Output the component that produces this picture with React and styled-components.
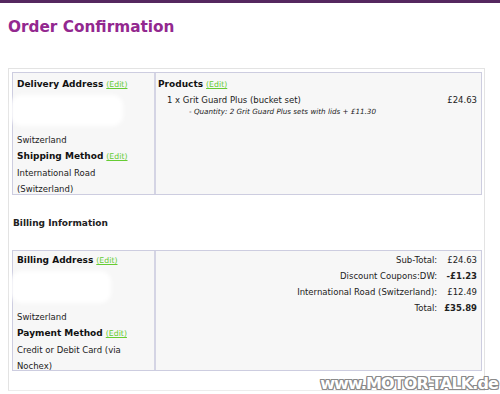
import React from 'react';
import styled, { createGlobalStyle } from 'styled-components';

const Global = createGlobalStyle`
  body {
    margin: 0;
    background: #fff;
    font-family: "DejaVu Sans", Verdana, sans-serif;
    color: #222;
  }
`;

const Page = styled.div`
  position: relative;
  width: 500px;
  height: 394px;
  overflow: hidden;
`;

const TopBar = styled.div`
  height: 3px;
  background: #55275f;
`;

const Title = styled.h1`
  margin: 14px 0 0 8px;
  font-size: 15.3px;
  line-height: 20px;
  font-weight: bold;
  color: #93288f;
`;

const Outer = styled.div`
  margin: 31px 15px 0 8px;
  border: 1px solid #e3e3e3;
  border-bottom-color: #ececec;
  padding: 3px 2px 19px 3px;
`;

const Table = styled.div`
  display: flex;
  border: 1px solid #cdcde0;
  background: #f7f7f7;
  height: ${(p) => p.h}px;
  box-sizing: border-box;
`;

const LeftCell = styled.div`
  width: 133px;
  border-right: 2px solid #d4d4e4;
  padding: ${(p) => p.top}px 4px 0 4px;
  font-size: 8.5px;
  line-height: 16px;
`;

const RightCell = styled.div`
  flex: 1;
  padding: ${(p) => p.top}px 3px 0 2px;
  font-size: 8.5px;
  line-height: 16px;
`;

const Heading = styled.div`
  font-weight: bold;
  font-size: 9px;
  color: #111;
`;

const Edit = styled.a`
  font-weight: normal;
  font-size: 7.8px;
  color: #6c3;
  text-decoration: underline;
  margin-left: 3px;
`;

const Redacted = styled.div`
  position: relative;
  height: ${(p) => p.h}px;
  &::before {
    content: '';
    position: absolute;
    left: -6px;
    top: 2px;
    width: ${(p) => p.w}px;
    height: ${(p) => p.h - 8}px;
    background: #fff;
    border-radius: 10px;
    filter: blur(2px);
  }
`;

const Line = styled.div``;

const ItemRow = styled.div`
  display: flex;
  justify-content: space-between;
  padding: 0 1px 0 9px;
  line-height: 15px;
`;

const ItemSub = styled.div`
  font-style: italic;
  font-size: 7.2px;
  line-height: 8px;
  padding-left: 31px;
`;

const Totals = styled.div`
  display: grid;
  grid-template-columns: 1fr auto;
  column-gap: 7px;
  text-align: right;
  padding-right: 1px;
`;

const Value = styled.span`
  font-weight: ${(p) => (p.bold ? 'bold' : 'normal')};
`;

const Section = styled.div`
  height: 55px;
  display: flex;
  align-items: center;
  padding-left: 1px;
  font-weight: bold;
  font-size: 9px;
`;

const Watermark = styled.div`
  position: absolute;
  right: 2px;
  bottom: 1px;
  font-size: 16px;
  font-weight: bold;
  letter-spacing: -0.9px;
  color: #fff;
  text-shadow: -1px -1px 0 #8a8a8a, 1px -1px 0 #8a8a8a, -1px 1px 0 #8a8a8a,
    1px 1px 0 #8a8a8a, 0 1px 0 #8a8a8a, 0 -1px 0 #8a8a8a, 1px 0 0 #8a8a8a,
    -1px 0 0 #8a8a8a;
`;

export default function App() {
  return (
    <Page>
      <Global />
      <TopBar />
      <Title>Order Confirmation</Title>
      <Outer>
        <Table h={123}>
          <LeftCell top={3}>
            <Heading>
              Delivery Address<Edit>(Edit)</Edit>
            </Heading>
            <Redacted h={39} w={112} />
            <Line>Switzerland</Line>
            <Heading>
              Shipping Method<Edit>(Edit)</Edit>
            </Heading>
            <Line>International Road</Line>
            <Line>(Switzerland)</Line>
          </LeftCell>
          <RightCell top={3}>
            <Heading>
              Products<Edit>(Edit)</Edit>
            </Heading>
            <ItemRow>
              <span>1 x Grit Guard Plus (bucket set)</span>
              <span>£24.63</span>
            </ItemRow>
            <ItemSub>- Quantity: 2 Grit Guard Plus sets with lids + £11.30</ItemSub>
          </RightCell>
        </Table>
        <Section>Billing Information</Section>
        <Table h={121}>
          <LeftCell top={1}>
            <Heading>
              Billing Address<Edit>(Edit)</Edit>
            </Heading>
            <Redacted h={40} w={100} />
            <Line>Switzerland</Line>
            <Heading>
              Payment Method<Edit>(Edit)</Edit>
            </Heading>
            <Line>Credit or Debit Card (via</Line>
            <Line>Nochex)</Line>
          </LeftCell>
          <RightCell top={1}>
            <Totals>
              <span>Sub-Total:</span>
              <Value>£24.63</Value>
              <span>Discount Coupons:DW:</span>
              <Value bold>-£1.23</Value>
              <span>International Road (Switzerland):</span>
              <Value>£12.49</Value>
              <span>Total:</span>
              <Value bold>£35.89</Value>
            </Totals>
          </RightCell>
        </Table>
      </Outer>
      <Watermark>www.MOTOR-TALK.de</Watermark>
    </Page>
  );
}
